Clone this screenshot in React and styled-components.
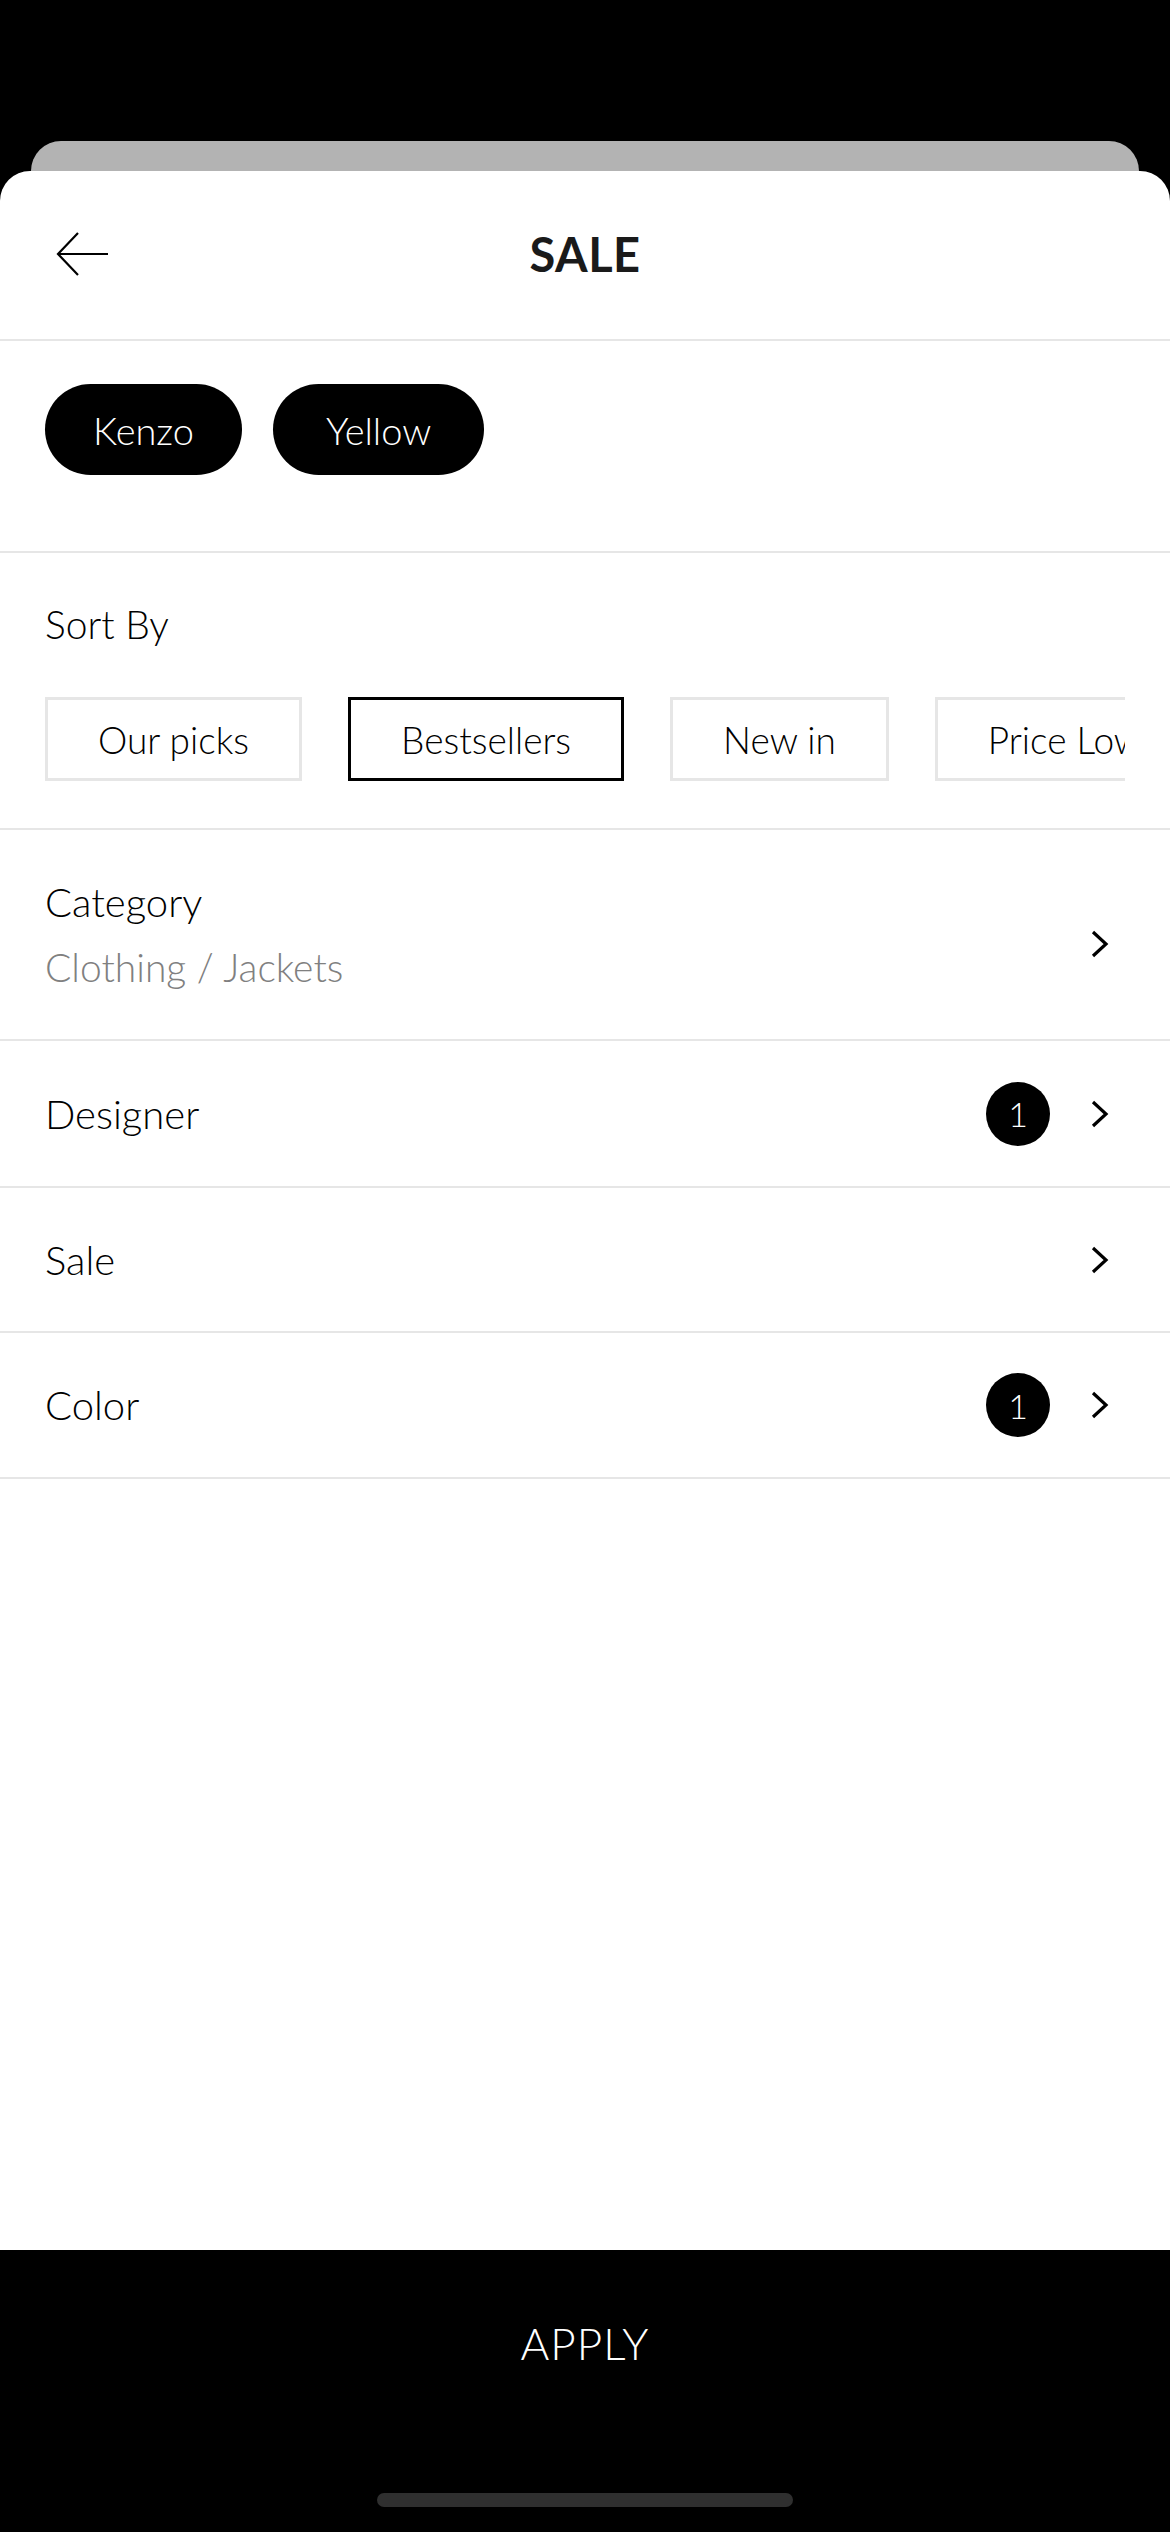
import React from "react";
import styled, { createGlobalStyle } from "styled-components";

const GlobalStyle = createGlobalStyle`
    html, body {
        margin: 0;
        padding: 0;
        background: #000;
    }
    * {
        box-sizing: border-box;
    }
`

const Screen = styled.div`
    width: 1170px;
    height: 2532px;
    display: flex;
    flex-direction: column;
    background: #000;
    padding-top: 141px;
    font-family: "Lato Light", "Lato", "Noto Sans", sans-serif;
    font-weight: 300;
    color: #000;
    overflow: hidden;
`

const BackCard = styled.div`
    height: 30px;
    margin: 0 31px;
    background: #b3b3b3;
    border-radius: 30px 30px 0 0;
`

const Sheet = styled.div`
    flex: 1;
    display: flex;
    flex-direction: column;
    background: #fff;
    border-radius: 30px 30px 0 0;
`

const Header = styled.div`
    height: 170px;
    display: grid;
    grid-template-columns: 140px 1fr 140px;
    align-items: center;
    border-bottom: 2px solid #e6e6e6;
    padding-bottom: 2px;
`

const BackButton = styled.button`
    border: none;
    background: none;
    padding: 0 0 0 56px;
    display: flex;
    align-items: center;
    cursor: pointer;
`

const Title = styled.h1`
    margin: 0;
    text-align: center;
    font-family: "Lato", sans-serif;
    font-weight: 700;
    font-size: 47px;
    letter-spacing: 0.5px;
    color: #1a1a1a;
`

const ChipSection = styled.div`
    height: 212px;
    padding: 43px 45px 0;
    display: flex;
    gap: 31px;
    align-items: flex-start;
    border-bottom: 2px solid #e6e6e6;
`

const Chip = styled.span`
    height: 91px;
    padding: 0 ${p => p.$pad}px;
    border-radius: 46px;
    background: #000;
    color: #fff;
    font-size: 38px;
    display: flex;
    align-items: center;
`

const SortSection = styled.div`
    height: 277px;
    padding: 52px 0 0 45px;
    border-bottom: 2px solid #e6e6e6;
`

const SectionTitle = styled.div`
    font-size: 39px;
    line-height: 39px;
`

const SortRow = styled.div`
    margin-top: 53px;
    margin-right: 45px;
    display: flex;
    gap: 46px;
    overflow: hidden;
`

const SortOption = styled.button`
    flex: none;
    height: 84px;
    padding: 0 50px;
    background: #fff;
    border: ${p => (p.$active ? "3px solid #000" : "3px solid #e6e6e6")};
    font-family: inherit;
    font-weight: 300;
    font-size: 37px;
    color: #000;
    cursor: pointer;
`

const FilterRow = styled.div`
    height: ${p => p.$h}px;
    padding: 0 60px 0 45px;
    display: flex;
    align-items: center;
    border-bottom: 2px solid #e6e6e6;
`

const RowText = styled.div`
    flex: 1;
    display: flex;
    flex-direction: column;
    gap: 25px;
`

const RowLabel = styled.div`
    font-size: 40px;
    line-height: 40px;
`

const RowValue = styled.div`
    font-size: 39px;
    line-height: 40px;
    color: #808080;
`

const Badge = styled.span`
    width: 64px;
    height: 64px;
    border-radius: 50%;
    background: #000;
    color: #fff;
    font-size: 34px;
    display: flex;
    align-items: center;
    justify-content: center;
    margin-right: 40px;
`

const ChevronWrap = styled.span`
    display: flex;
    margin-top: ${p => p.$drop || 0}px;
`

const Spacer = styled.div`
    flex: 1;
`

const ApplyBar = styled.div`
    height: 282px;
    background: #000;
    display: flex;
    flex-direction: column;
    align-items: center;
    padding-top: 66px;
`

const ApplyButton = styled.button`
    border: none;
    background: none;
    color: #fff;
    font-family: inherit;
    font-weight: 300;
    font-size: 44px;
    letter-spacing: 1px;
    cursor: pointer;
`

const HomeIndicator = styled.div`
    margin-top: auto;
    margin-bottom: 25px;
    width: 416px;
    height: 14px;
    border-radius: 7px;
    background: #2f2f2f;
`

const Chevron = () => (
    <svg width="20" height="28" viewBox="0 0 20 28">
        <path d="M3 2 L16 14 L3 26" fill="none" stroke="#000" strokeWidth="3.2" strokeLinejoin="miter" />
    </svg>
)

const ArrowLeft = () => (
    <svg width="54" height="44" viewBox="0 0 54 44">
        <path d="M52 22 H2 M22 1 L2 22 L22 43" fill="none" stroke="#000" strokeWidth="2.2" />
    </svg>
)

const chips = [
    { label: "Kenzo", pad: 48 },
    { label: "Yellow", pad: 53 },
]

const sortOptions = ["Our picks", "Bestsellers", "New in", "Price Low to High", "Price High to Low"]

const filters = [
    { label: "Category", value: "Clothing / Jackets", h: 211, drop: 18 },
    { label: "Designer", count: 1, h: 147 },
    { label: "Sale", h: 145 },
    { label: "Color", count: 1, h: 146 },
]

export default function App() {
    return (
        <Screen>
            <GlobalStyle />
            <BackCard />
            <Sheet>
                <Header>
                    <BackButton aria-label="Back"><ArrowLeft /></BackButton>
                    <Title>SALE</Title>
                    <div />
                </Header>
                <ChipSection>
                    {chips.map(chip => (
                        <Chip key={chip.label} $pad={chip.pad}>{chip.label}</Chip>
                    ))}
                </ChipSection>
                <SortSection>
                    <SectionTitle>Sort By</SectionTitle>
                    <SortRow>
                        {sortOptions.map(option => (
                            <SortOption key={option} $active={option === "Bestsellers"}>{option}</SortOption>
                        ))}
                    </SortRow>
                </SortSection>
                {filters.map(filter => (
                    <FilterRow key={filter.label} $h={filter.h}>
                        <RowText>
                            <RowLabel>{filter.label}</RowLabel>
                            {filter.value && <RowValue>{filter.value}</RowValue>}
                        </RowText>
                        {filter.count && <Badge>{filter.count}</Badge>}
                        <ChevronWrap $drop={filter.drop}><Chevron /></ChevronWrap>
                    </FilterRow>
                ))}
                <Spacer />
            </Sheet>
            <ApplyBar>
                <ApplyButton>APPLY</ApplyButton>
                <HomeIndicator />
            </ApplyBar>
        </Screen>
    )
}
